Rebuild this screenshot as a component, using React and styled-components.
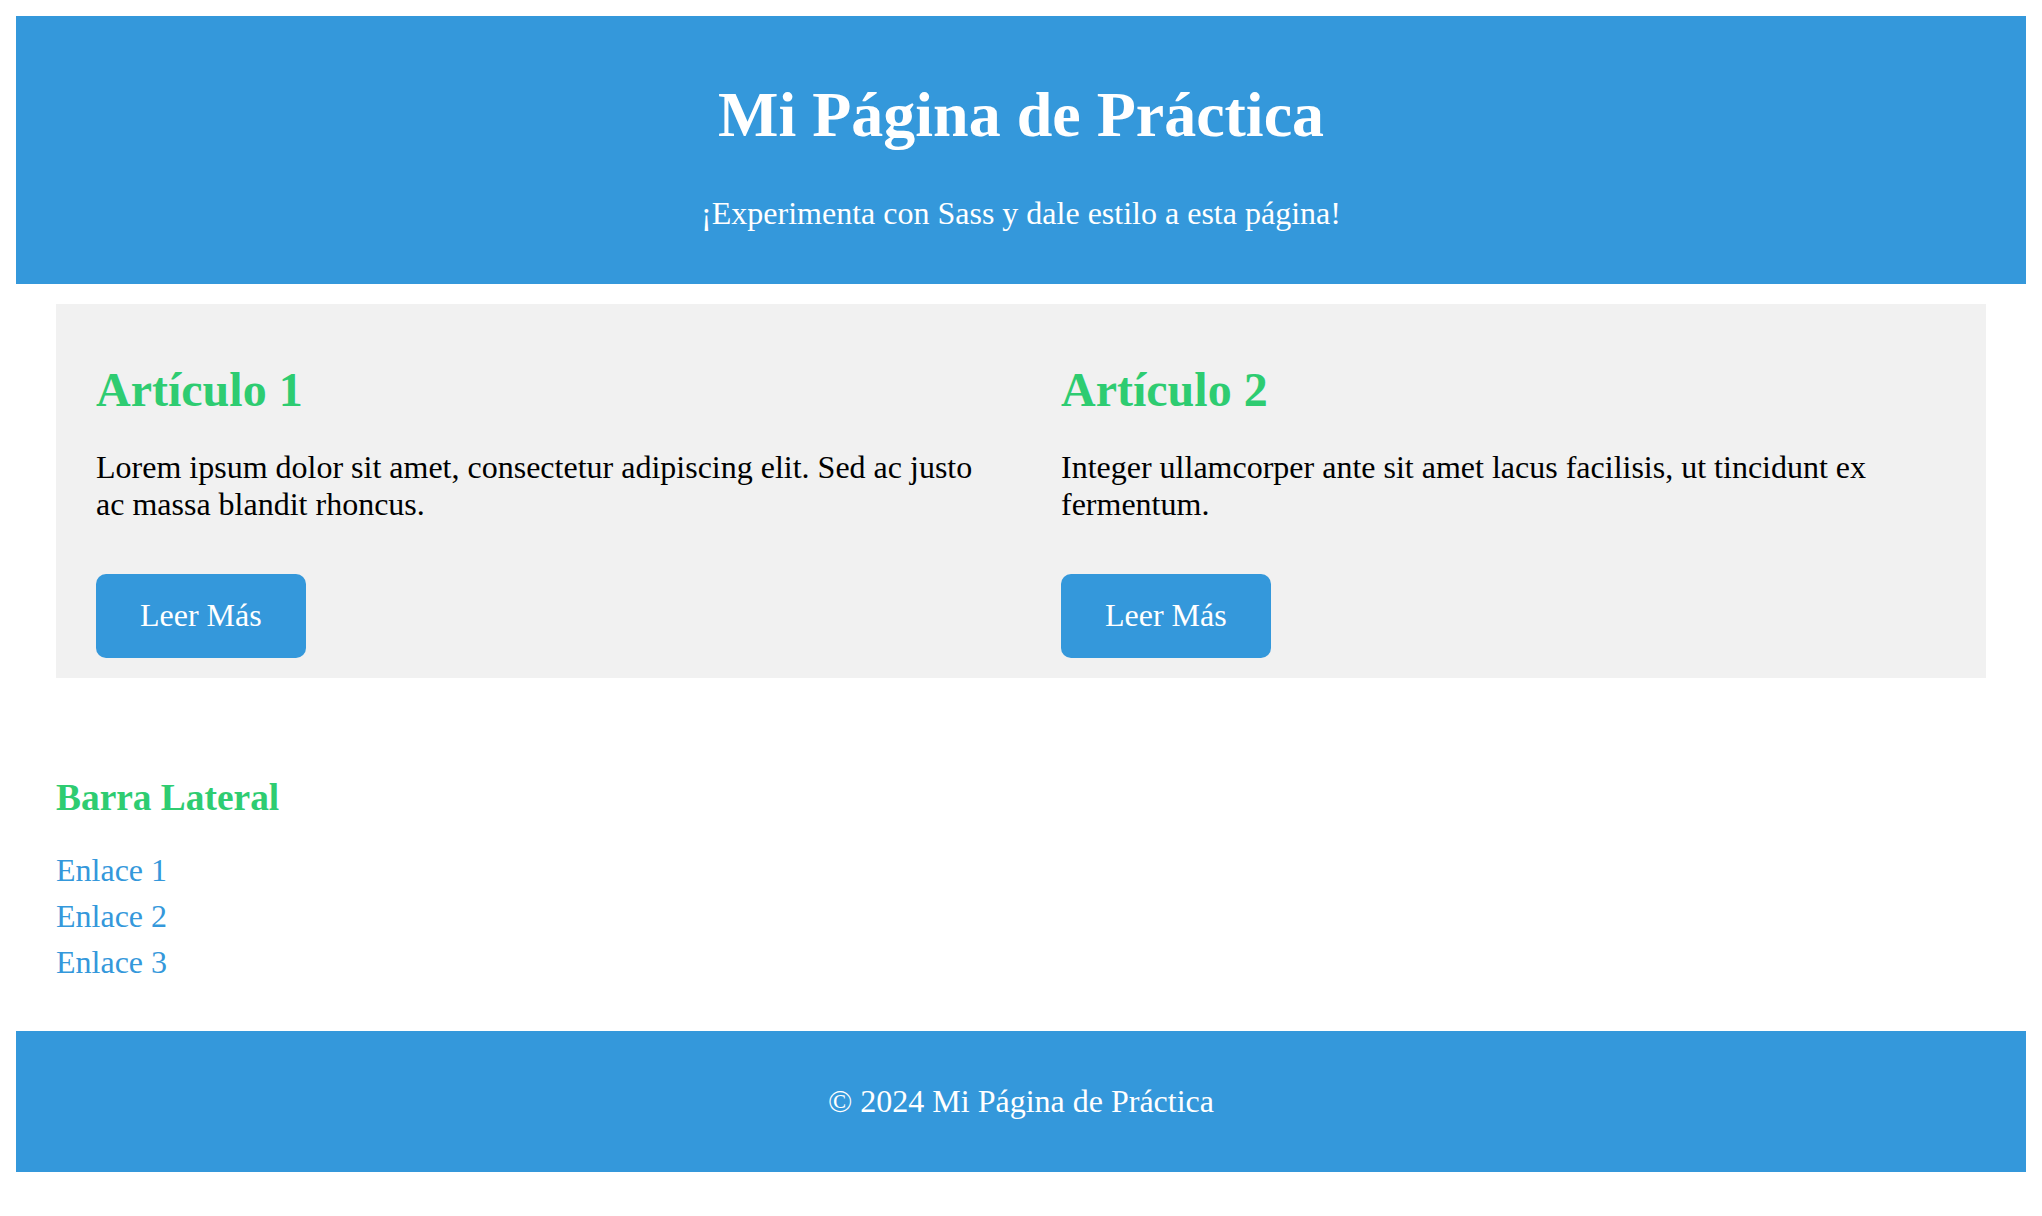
import React from 'react'
import styled, { createGlobalStyle } from 'styled-components'

const blue = '#3498db'
const green = '#2ecc71'

const GlobalStyle = createGlobalStyle`
  body {
    margin: 16px;
    font-family: "Liberation Serif", "Times New Roman", serif;
    font-size: 32px;
    color: #000;
    background: #fff;
  }
`

const Header = styled.header`
  background-color: ${blue};
  color: #fff;
  text-align: center;
  padding: 20px;
`
const Title = styled.h1`
  font-size: 64px;
  font-weight: bold;
  margin: 42px 0 43px;
`
const Subtitle = styled.p`
  margin: 0 0 32px;
`

const Main = styled.main`
  display: flex;
  margin: 20px 40px;
  background-color: #f1f1f1;
`
const Article = styled.article`
  flex: 1;
  display: flex;
  flex-direction: column;
  align-items: flex-start;
  padding: 58px 40px 20px;
`
const ArticleTitle = styled.h2`
  color: ${green};
  font-size: 48px;
  font-weight: bold;
  margin: 0 0 32px;
`
const ArticleText = styled.p`
  margin: 0;
`
const ReadMore = styled.a`
  display: inline-block;
  margin-top: 51px;
  padding: 23px 44px 24px;
  background-color: ${blue};
  color: #fff;
  text-decoration: none;
  border-radius: 10px;
  cursor: pointer;
`

const Sidebar = styled.aside`
  margin: 0 40px;
  padding: 41px 0 18px;
`
const SidebarTitle = styled.h3`
  color: ${green};
  font-size: 37.4px;
  font-weight: bold;
  margin: 37px 0 0;
`
const LinkList = styled.ul`
  list-style: none;
  padding: 0;
  margin: 33px 0 32px;
`
const LinkItem = styled.li`
  margin-bottom: 9px;
  &:last-child {
    margin-bottom: 0;
  }
`
const SideLink = styled.a`
  color: ${blue};
  text-decoration: none;
`

const Footer = styled.footer`
  background-color: ${blue};
  color: #fff;
  text-align: center;
  padding: 20px;
`
const FooterText = styled.p`
  margin: 32px 0;
`

const articles = [
  {
    title: 'Artículo 1',
    text: 'Lorem ipsum dolor sit amet, consectetur adipiscing elit. Sed ac justo ac massa blandit rhoncus.',
  },
  {
    title: 'Artículo 2',
    text: 'Integer ullamcorper ante sit amet lacus facilisis, ut tincidunt ex fermentum.',
  },
]

const links = ['Enlace 1', 'Enlace 2', 'Enlace 3']

export default function App() {
  return (
    <>
      <GlobalStyle />
      <Header>
        <Title>Mi Página de Práctica</Title>
        <Subtitle>¡Experimenta con Sass y dale estilo a esta página!</Subtitle>
      </Header>
      <Main>
        {articles.map((a, i) => (
          <Article key={i}>
            <ArticleTitle>{a.title}</ArticleTitle>
            <ArticleText>{a.text}</ArticleText>
            <ReadMore href="#">Leer Más</ReadMore>
          </Article>
        ))}
      </Main>
      <Sidebar>
        <SidebarTitle>Barra Lateral</SidebarTitle>
        <LinkList>
          {links.map((l, i) => (
            <LinkItem key={i}>
              <SideLink href="#">{l}</SideLink>
            </LinkItem>
          ))}
        </LinkList>
      </Sidebar>
      <Footer>
        <FooterText>© 2024 Mi Página de Práctica</FooterText>
      </Footer>
    </>
  )
}
